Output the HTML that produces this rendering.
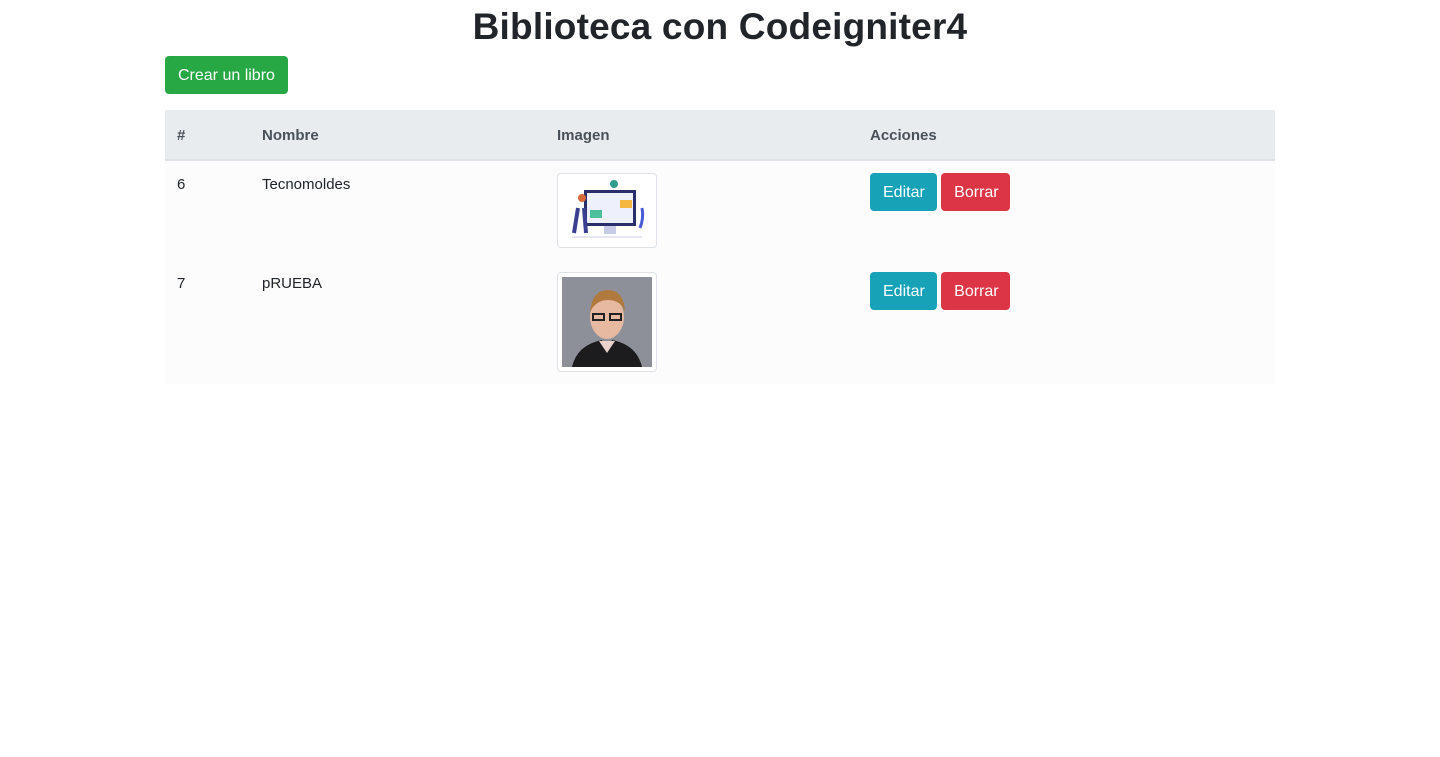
<!DOCTYPE html>
<html><head><style>
body{margin:0;background:#fff;font-family:"Liberation Sans",sans-serif;color:#212529;font-size:16px}
h1{margin:0;text-align:center;font-size:37px;font-weight:bold;line-height:53px;padding-top:0;letter-spacing:0.2px}
.wrap{position:relative;width:1110px;margin-left:165px}
.btn{display:inline-block;color:#fff;border-radius:4px;font-size:16px;line-height:24px;padding:8px 13px 6px;box-sizing:border-box}
.green{background:#28a745;position:absolute;left:0;top:3px;height:38px;width:123px}
table{position:absolute;top:57px;left:0;width:1110px;border-collapse:collapse}
th{background:#e9ecef;color:#495057;text-align:left;font-weight:bold;padding:16px 12px 13px;line-height:20px;border-bottom:2px solid #dee2e6;font-size:15px}
td{vertical-align:top;padding:12px;background:#fcfcfc;font-size:15px;line-height:24px}
.thumb{border:1px solid #dee2e6;border-radius:4px;padding:4px;background:#fff;width:90px;box-sizing:content-box;line-height:0}
.info{background:#17a2b8}.red{background:#dc3545}
</style></head><body>
<h1>Biblioteca con Codeigniter4</h1>
<div class="wrap">
<span class="btn green">Crear un libro</span>
<table>
<tr><th style="width:61px">#</th><th style="width:271px">Nombre</th><th style="width:289px">Imagen</th><th>Acciones</th></tr>
<tr style="height:100px"><td>6</td><td>Tecnomoldes</td><td><div class="thumb" style="height:65px">
<svg width="90" height="65" viewBox="0 0 90 65"><rect x="22" y="12" width="52" height="36" fill="#2a2f6b"/><rect x="25" y="15" width="46" height="30" fill="#eef0fb"/><rect x="42" y="48" width="12" height="8" fill="#c8cbe8"/><rect x="10" y="58" width="70" height="2" fill="#e6e6f0"/><rect x="58" y="22" width="12" height="8" fill="#f5b740"/><rect x="28" y="32" width="12" height="8" fill="#4cc09a"/><circle cx="20" cy="20" r="4" fill="#d86a3a"/><path d="M16 30 L12 55 M22 30 L24 55" stroke="#3b3f8f" stroke-width="4"/><circle cx="52" cy="6" r="4" fill="#2f9c8c"/><path d="M78 50 q4 -10 2 -20" stroke="#4a5bd8" stroke-width="3" fill="none"/></svg></div></td>
<td><span class="btn info" style="width:67px;height:38px">Editar</span> <span class="btn red" style="width:69px;height:38px">Borrar</span></td></tr>
<tr style="height:124px"><td>7</td><td>pRUEBA</td><td><div class="thumb" style="height:90px">
<svg width="90" height="90" viewBox="0 0 90 90"><rect width="90" height="90" fill="#8d9099"/><ellipse cx="45" cy="40" rx="17" ry="22" fill="#e6b9a0"/><path d="M28 35 q2 -22 18 -22 q16 0 17 22 q-4 -12 -17 -12 q-12 0 -18 12z" fill="#b07a3e"/><rect x="31" y="37" width="11" height="6" fill="none" stroke="#222" stroke-width="2"/><rect x="48" y="37" width="11" height="6" fill="none" stroke="#222" stroke-width="2"/><path d="M10 90 q5 -22 30 -27 l5 10 l5 -10 q25 5 30 27z" fill="#1c1c1e"/><path d="M37 64 l8 12 l8 -12z" fill="#e9d2cc"/></svg></div></td>
<td><span class="btn info" style="width:67px;height:38px">Editar</span> <span class="btn red" style="width:69px;height:38px">Borrar</span></td></tr>
</table>
</div>
</body></html>
